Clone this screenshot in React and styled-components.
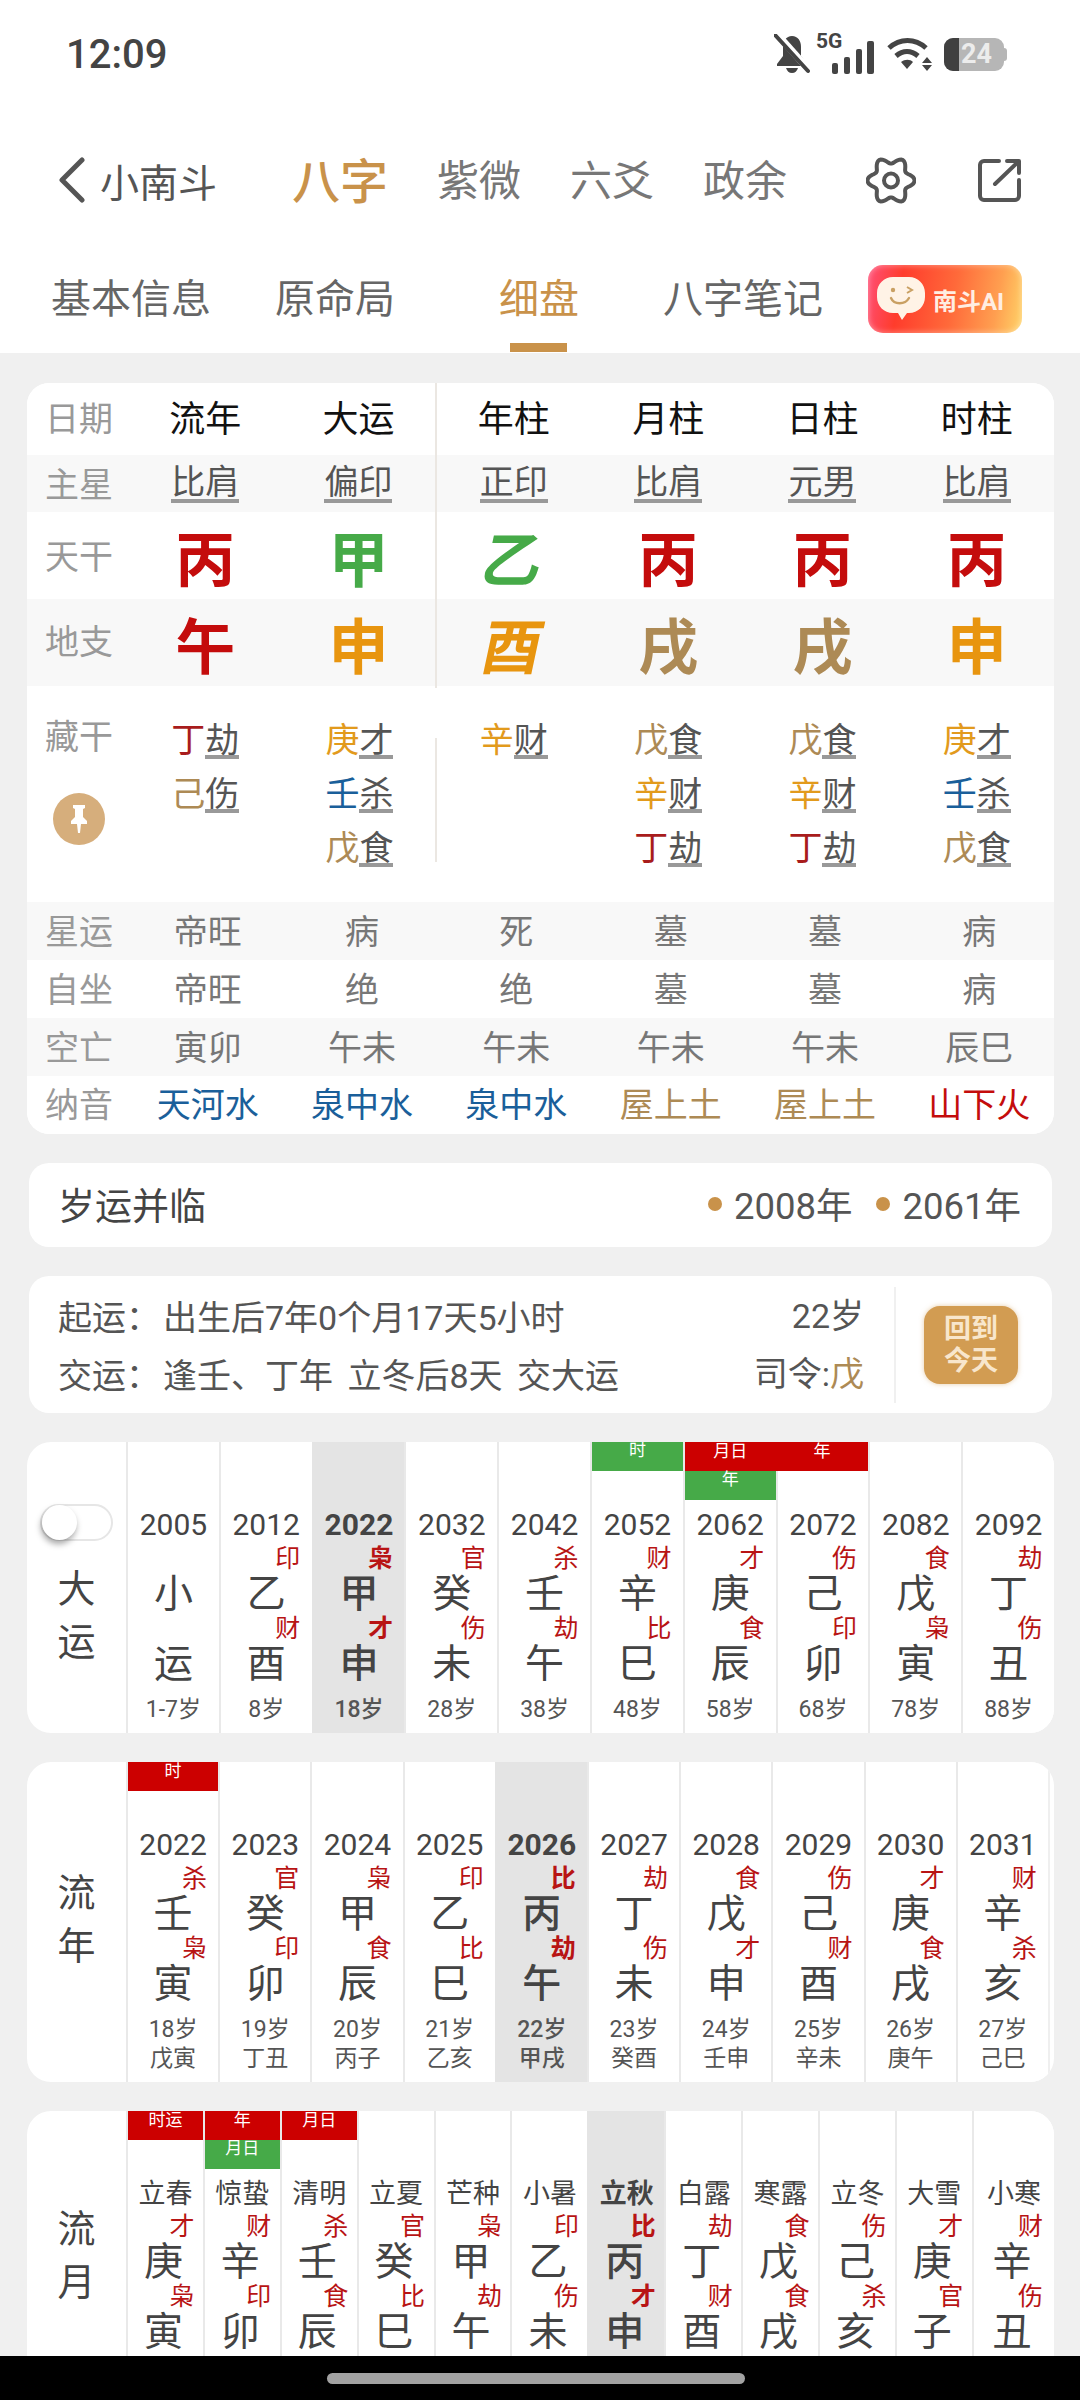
import React from 'react';
import styled, { createGlobalStyle } from 'styled-components';

const RED = '#c40c0c';
const GREEN = '#46aa48';
const ORANGE = '#e8950f';
const BROWN = '#ad8a55';
const BLUE = '#1a5f9a';
const GOLD = '#c9924a';

const elementColor = {
  丙: RED, 丁: '#a81c1c', 午: RED, 甲: GREEN, 乙: GREEN, 申: ORANGE, 酉: ORANGE,
  庚: '#e29a1c', 辛: '#e29a1c', 戌: BROWN, 戊: BROWN, 己: BROWN, 壬: BLUE,
};

const GlobalStyle = createGlobalStyle`
  html, body {
    margin: 0;
    padding: 0;
    background: #f0f0f0;
  }
  body {
    font-family: Roboto, "Noto Sans CJK SC", sans-serif;
    color: #444;
  }
  * {
    box-sizing: border-box;
  }
`;

const Page = styled.div`
  width: 1080px;
  height: 2400px;
  display: flex;
  flex-direction: column;
  overflow: hidden;
`;

const Header = styled.header`
  background: #fff;
  flex: none;
`;

const StatusBar = styled.div`
  height: 108px;
  display: flex;
  align-items: center;
  justify-content: space-between;
  padding: 0 73px 0 66px;
`;

const Clock = styled.span`
  font-size: 40px;
  font-weight: 500;
  color: #444;
`;

const StatusIcons = styled.div`
  display: flex;
  align-items: center;
  gap: 12px;
`;

const Signal = styled.div`
  position: relative;
  width: 58px;
  height: 39px;
  margin-left: -6px;
  display: flex;
  align-items: flex-end;
  justify-content: flex-end;
`;

const FiveG = styled.span`
  position: absolute;
  left: 0;
  top: -4px;
  font-size: 21px;
  line-height: 20px;
  font-weight: 700;
  color: #444;
`;

const Battery = styled.div`
  position: relative;
  width: 60px;
  height: 33px;
  border-radius: 9px;
  background: #b6b6b6;
  overflow: hidden;
  display: flex;
  align-items: center;
  justify-content: flex-end;
  padding-right: 12px;
  font-size: 27px;
  font-weight: 700;
  color: #ececec;
  &::before {
    content: '';
    position: absolute;
    left: 0;
    top: 0;
    bottom: 0;
    width: 15px;
    background: #404040;
  }
`;

const BatteryCap = styled.span`
  width: 3px;
  height: 13px;
  margin-left: -12px;
  background: #b6b6b6;
  border-radius: 0 3px 3px 0;
`;

const NavRow = styled.nav`
  height: 144px;
  display: flex;
  align-items: center;
  padding: 0 58px;
`;

const Back = styled.div`
  display: flex;
  align-items: center;
  gap: 15px;
  font-size: 39px;
  color: #555;
  padding-bottom: 1px;
`;

const Modes = styled.div`
  display: flex;
  align-items: center;
  gap: 49px;
  margin-left: 75px;
  padding-bottom: 5px;
`;

const Mode = styled.span`
  font-size: ${(p) => (p.$active ? '48px' : '42px')};
  font-weight: ${(p) => (p.$active ? 500 : 400)};
  color: ${(p) => (p.$active ? GOLD : '#777')};
`;

const NavActions = styled.div`
  margin-left: auto;
  display: flex;
  align-items: center;
  gap: 61px;
`;

const TabRow = styled.div`
  height: 101px;
  display: grid;
  grid-template-columns: repeat(5, 204px);
  padding-left: 29px;
`;

const Tab = styled.div`
  position: relative;
  display: flex;
  align-items: center;
  justify-content: center;
  padding-bottom: 13px;
  font-size: 40px;
  color: ${(p) => (p.$active ? GOLD : '#666')};
  ${(p) =>
    p.$active &&
    `&::after {
      content: '';
      position: absolute;
      left: 73px;
      bottom: 1px;
      width: 57px;
      height: 9px;
      background: ${GOLD};
    }`}
`;

const AiBadge = styled.div`
  width: 154px;
  height: 68px;
  margin: 13px 0 0 23px;
  border-radius: 15px;
  background: linear-gradient(100deg, #ff4f78 0%, #ff3c2c 22%, #ff6a3a 55%, #ff9f50 82%, #ffd468 100%);
  box-shadow: inset 0 0 6px rgba(255, 255, 255, 0.45);
  display: flex;
  align-items: center;
  gap: 8px;
  padding-left: 9px;
  font-size: 24px;
  font-weight: 700;
  color: #ffeee2;
  white-space: nowrap;
`;

const Scroll = styled.main`
  flex: 1;
  min-height: 0;
  overflow: hidden;
  padding-top: 30px;
  display: flex;
  flex-direction: column;
  gap: 29px;
`;

const BaziCard = styled.section`
  flex: none;
  width: 1027px;
  margin-left: 27px;
  background: #fff;
  border-radius: 22px;
  overflow: hidden;
`;

const BaziRow = styled.div`
  height: ${(p) => p.$h}px;
  display: grid;
  grid-template-columns: 101px repeat(6, 1fr);
  background: ${(p) => (p.$shade ? '#f8f8f8' : '#fff')};
`;

const RowLabel = styled.div`
  display: flex;
  align-items: center;
  justify-content: center;
  padding-left: 3px;
  padding-bottom: ${(p) => p.$lift || 0}px;
  font-size: 34px;
  color: #999;
`;

const BaziCell = styled.div`
  display: flex;
  align-items: center;
  justify-content: center;
  padding-bottom: ${(p) => p.$lift || 0}px;
  padding-left: ${(p) => p.$nudge || 0}px;
  font-size: ${(p) => p.$size || 34}px;
  font-weight: ${(p) => p.$weight || 400};
  color: ${(p) => p.$color || '#777'};
  border-right: ${(p) => (p.$divider ? '2px solid #ebe7e2' : 'none')};
`;

const Underlined = styled.span`
  line-height: 34px;
  border-bottom: 4px solid #999;
  color: #555;
`;

const BigChar = styled.span`
  display: inline-block;
  transform: ${(p) => (p.$slant ? 'skewX(-12deg)' : 'none')};
`;

const HiddenRow = styled.div`
  height: 216px;
  display: grid;
  grid-template-columns: 101px repeat(6, 1fr);
  padding-top: 29px;
`;

const HiddenLabel = styled.div`
  display: flex;
  flex-direction: column;
  align-items: center;
  padding-left: 3px;
  font-size: 34px;
  line-height: 44px;
  color: #999;
`;

const PinButton = styled.div`
  width: 52px;
  height: 52px;
  margin-top: 34px;
  border-radius: 50%;
  background: #d6ae7c;
  display: flex;
  align-items: center;
  justify-content: center;
`;

const HiddenCol = styled.div`
  position: relative;
  display: flex;
  flex-direction: column;
  align-items: center;
  ${(p) =>
    p.$divider &&
    `&::after {
      content: '';
      position: absolute;
      right: 0;
      top: 23px;
      width: 2px;
      height: 124px;
      background: #ebe7e2;
    }`}
`;

const HiddenItem = styled.div`
  height: 54px;
  display: flex;
  align-items: center;
  font-size: 34px;
`;

const HiddenStem = styled.span`
  line-height: 30px;
  padding-bottom: 4px;
  color: ${(p) => p.$color};
`;

const HiddenGod = styled.span`
  line-height: 30px;
  border-bottom: 4px solid #999;
  color: #555;
`;

const SummaryCard = styled.section`
  flex: none;
  width: 1023px;
  height: 84px;
  margin-left: 29px;
  background: #fff;
  border-radius: 20px;
  display: flex;
  align-items: center;
  justify-content: space-between;
  padding: 0 31px 3px 29px;
`;

const SummaryTitle = styled.span`
  font-size: 37px;
  color: #444;
`;

const SummaryYears = styled.div`
  display: flex;
  align-items: center;
  gap: 24px;
  font-size: 36.5px;
  color: #555;
`;

const YearMark = styled.span`
  display: flex;
  align-items: center;
  gap: 12px;
  &::before {
    content: '';
    width: 14px;
    height: 14px;
    border-radius: 50%;
    background: ${GOLD};
  }
`;

const InfoCard = styled.section`
  flex: none;
  width: 1023px;
  height: 137px;
  margin-left: 29px;
  background: #fff;
  border-radius: 20px;
  display: flex;
  align-items: center;
  padding: 0 34px 0 29px;
  font-size: 34px;
  color: #555;
`;

const InfoLines = styled.div`
  flex: 1;
`;

const InfoLine = styled.div`
  height: 58px;
  display: flex;
  align-items: center;
  white-space: pre;
  word-spacing: 6px;
`;

const InfoKey = styled.span`
  width: 105px;
`;

const InfoSide = styled.div`
  text-align: right;
  padding-right: 30px;
  border-right: 2px solid #f0f0f0;
`;

const SideLine = styled.div`
  height: 58px;
  line-height: 58px;
`;

const Accent = styled.span`
  color: ${BROWN};
`;

const BackToday = styled.div`
  width: 94px;
  height: 78px;
  margin-left: 28px;
  border-radius: 16px;
  background: #d29c52;
  box-shadow: 0 0 5px rgba(210, 156, 82, 0.5);
  display: flex;
  flex-direction: column;
  align-items: center;
  justify-content: center;
  font-size: 27px;
  line-height: 32px;
  font-weight: 700;
  color: #f8e6cc;
`;

const ChartCard = styled.section`
  flex: none;
  width: 1027px;
  margin-left: 27px;
  background: #fff;
  border-radius: 24px;
  overflow: hidden;
  display: grid;
  grid-template-columns: ${(p) => p.$columns};
`;

const SideTitle = styled.div`
  display: flex;
  flex-direction: column;
  align-items: center;
  padding-top: ${(p) => p.$pad}px;
  font-size: 38px;
  line-height: 53px;
  color: #444;
`;

const Toggle = styled.div`
  width: 73px;
  height: 37px;
  margin-bottom: 22px;
  border-radius: 19px;
  border: 2px solid #e6e6e6;
  background: #fff;
  position: relative;
  &::before {
    content: '';
    position: absolute;
    left: 0;
    top: -1px;
    width: 35px;
    height: 35px;
    border-radius: 50%;
    background: #fff;
    box-shadow: -1px 4px 6px rgba(0, 0, 0, 0.35);
  }
`;

const Column = styled.div`
  border-left: 2px solid #e9e9e9;
  background: ${(p) => (p.$today ? '#e4e4e4' : '#fff')};
  border-left-color: ${(p) => (p.$today ? '#e4e4e4' : '#e9e9e9')};
  display: flex;
  flex-direction: column;
  align-items: center;
  min-width: 0;
  padding-bottom: 13px;
`;

const MarkerSlot = styled.div`
  width: 100%;
  height: 58px;
`;

const Marker = styled.div`
  height: 29px;
  margin-left: ${(p) => (p.$join ? '-2px' : '0')};
  background: ${(p) => (p.$green ? GREEN : '#cc0000')};
  color: #fff;
  font-size: 17px;
  line-height: ${(p) => (p.$green ? '16px' : '18px')};
  text-align: center;
  white-space: nowrap;
`;

const Heading = styled.div`
  height: ${(p) => (p.$term ? 44 : 48)}px;
  margin-bottom: ${(p) => (p.$term ? 11 : 8)}px;
  display: flex;
  align-items: center;
  font-size: ${(p) => (p.$term ? 27 : 30)}px;
  font-weight: ${(p) => (p.$today ? 700 : 400)};
  color: #444;
  white-space: nowrap;
`;

const Pillar = styled.div`
  position: relative;
  width: 100%;
  height: 70px;
  display: flex;
  align-items: center;
  justify-content: center;
  padding-right: ${(p) => (p.$term ? 4 : 0)}px;
  padding-bottom: 3px;
  font-size: 39px;
  font-weight: ${(p) => (p.$today ? 500 : 400)};
  color: #444;
`;

const God = styled.span`
  position: absolute;
  top: -10px;
  left: calc(50% + ${(p) => (p.$term ? 4 : 9)}px);
  font-size: 25px;
  line-height: 26px;
  font-weight: ${(p) => (p.$today ? 700 : 400)};
  color: #b81414;
`;

const Age = styled.div`
  height: 20px;
  margin-top: 4px;
  line-height: 20px;
  font-size: 23px;
  font-weight: ${(p) => (p.$today ? 500 : 400)};
  color: #555;
  white-space: nowrap;
`;

const GanZhi = styled.div`
  margin-top: 9px;
  height: 20px;
  line-height: 20px;
  font-size: 23px;
  font-weight: ${(p) => (p.$today ? 500 : 400)};
  color: #555;
  white-space: nowrap;
`;

const TailGap = styled.div`
  background: #efefef;
`;

const HomeBar = styled.footer`
  flex: none;
  height: 44px;
  background: #000;
  display: flex;
  justify-content: center;
  padding: 17px 8px 0 0;
`;

const HomeIndicator = styled.div`
  width: 418px;
  height: 11px;
  border-radius: 6px;
  background: #a2a2a2;
`;

const gearPath = (() => {
  const pts = [];
  for (let a = 0; a < 360; a += 4) {
    const t = (a * Math.PI) / 180;
    const r = 20.2 + 3.4 * Math.cos(6 * t);
    pts.push(`${(25 + r * Math.cos(t)).toFixed(1)} ${(24.5 + r * Math.sin(t)).toFixed(1)}`);
  }
  return `M${pts.join('L')}Z`;
})();

const BellOff = () => (
  <svg width="36" height="40" viewBox="0 0 36 40">
    <path d="M18 2c-6 0-9 5-9 11v9l-6 8v2h30v-2l-6-8v-9c0-6-3-11-9-11z" fill="#444" />
    <path d="M12 34h12c-1 3-3 5-6 5s-5-2-6-5z" fill="#444" />
    <path d="M3 0L35 36" stroke="#fff" strokeWidth="7" />
    <path d="M1 1L34 37" stroke="#444" strokeWidth="4" strokeLinecap="round" />
  </svg>
);

const SignalBars = () => (
  <svg width="42" height="33" viewBox="0 0 42 33" fill="#444">
    <rect x="0" y="22" width="6" height="11" rx="2" />
    <rect x="12" y="16" width="6" height="17" rx="2" />
    <rect x="24" y="8" width="6" height="25" rx="2" />
    <rect x="35" y="0" width="7" height="33" rx="2" />
  </svg>
);

const Wifi = () => (
  <svg width="46" height="34" viewBox="0 0 46 34">
    <path d="M3 11C14 1 29 1 40 11" fill="none" stroke="#444" strokeWidth="5" />
    <path d="M10 19c7-6 15-6 22 0" fill="none" stroke="#444" strokeWidth="5" />
    <path d="M15 25c4-3 9-3 12 0l-6 7z" fill="#444" />
    <path d="M41 20l5 6H36zM36 28h10l-5 6z" fill="#444" />
  </svg>
);

const BackChevron = () => (
  <svg width="27" height="46" viewBox="0 0 27 46">
    <path d="M24 3L4 23l20 20" fill="none" stroke="#555" strokeWidth="5" strokeLinecap="round" strokeLinejoin="round" />
  </svg>
);

const Gear = () => (
  <svg width="50" height="49" viewBox="0 0 50 49" fill="none" stroke="#555" strokeWidth="4">
    <path d={gearPath} />
    <circle cx="25" cy="24.5" r="7" />
  </svg>
);

const ShareOut = () => (
  <svg width="45" height="45" viewBox="0 0 45 45" fill="none" stroke="#555" strokeWidth="4" strokeLinecap="round" strokeLinejoin="round">
    <path d="M22 3H7a4 4 0 0 0-4 4v31a4 4 0 0 0 4 4h31a4 4 0 0 0 4-4V22" />
    <path d="M30 3h12v12M18 26L41 4" />
  </svg>
);

const Pin = () => (
  <svg width="20" height="30" viewBox="0 0 20 30" fill="#fff">
    <path d="M4 1h12v3l-2 1v8l4 4v3H12l-1 9h-2l-1-9H2v-3l4-4V5L4 4z" />
  </svg>
);

const Bubble = () => (
  <svg width="48" height="46" viewBox="0 0 48 46">
    <path d="M16 1h16c9 0 16 7 16 16v4c0 9-7 16-16 16h-2l-5 7-4-7h-5C7 37 0 30 0 21v-4C0 8 7 1 16 1z" fill="#fff3e6" />
    <circle cx="16" cy="14" r="2.2" fill="#c9a063" />
    <path d="M30 11l5 3-5 3" fill="none" stroke="#c9a063" strokeWidth="2" />
    <path d="M14 22c3 7 14 7 18 0" fill="none" stroke="#c9a063" strokeWidth="2.4" strokeLinecap="round" />
  </svg>
);

const pillars = [
  { head: '流年', star: '比肩', stem: '丙', branch: '午', hidden: ['丁劫', '己伤'], luck: '帝旺', seat: '帝旺', empty: '寅卯', sound: '天河水', soundColor: BLUE },
  { head: '大运', star: '偏印', stem: '甲', branch: '申', hidden: ['庚才', '壬杀', '戊食'], luck: '病', seat: '绝', empty: '午未', sound: '泉中水', soundColor: BLUE },
  { head: '年柱', star: '正印', stem: '乙', branch: '酉', slant: true, hidden: ['辛财'], luck: '死', seat: '绝', empty: '午未', sound: '泉中水', soundColor: BLUE },
  { head: '月柱', star: '比肩', stem: '丙', branch: '戌', hidden: ['戊食', '辛财', '丁劫'], luck: '墓', seat: '墓', empty: '午未', sound: '屋上土', soundColor: BROWN },
  { head: '日柱', star: '元男', stem: '丙', branch: '戌', hidden: ['戊食', '辛财', '丁劫'], luck: '墓', seat: '墓', empty: '午未', sound: '屋上土', soundColor: BROWN },
  { head: '时柱', star: '比肩', stem: '丙', branch: '申', hidden: ['庚才', '壬杀', '戊食'], luck: '病', seat: '病', empty: '辰巳', sound: '山下火', soundColor: RED },
];

const dayun = [
  { head: '2005', stem: '小', branch: '运', age: '1-7岁' },
  { head: '2012', stem: '乙', sg: '印', branch: '酉', bg: '财', age: '8岁' },
  { head: '2022', stem: '甲', sg: '枭', branch: '申', bg: '才', age: '18岁', today: true },
  { head: '2032', stem: '癸', sg: '官', branch: '未', bg: '伤', age: '28岁' },
  { head: '2042', stem: '壬', sg: '杀', branch: '午', bg: '劫', age: '38岁' },
  { head: '2052', stem: '辛', sg: '财', branch: '巳', bg: '比', age: '48岁', marks: [{ text: '时', green: true }] },
  { head: '2062', stem: '庚', sg: '才', branch: '辰', bg: '食', age: '58岁', marks: [{ text: '月日' }, { text: '年', green: true }] },
  { head: '2072', stem: '己', sg: '伤', branch: '卯', bg: '印', age: '68岁', marks: [{ text: '年', join: true }] },
  { head: '2082', stem: '戊', sg: '食', branch: '寅', bg: '枭', age: '78岁' },
  { head: '2092', stem: '丁', sg: '劫', branch: '丑', bg: '伤', age: '88岁' },
];

const liunian = [
  { head: '2022', stem: '壬', sg: '杀', branch: '寅', bg: '枭', age: '18岁', gz: '戊寅', marks: [{ text: '时' }] },
  { head: '2023', stem: '癸', sg: '官', branch: '卯', bg: '印', age: '19岁', gz: '丁丑' },
  { head: '2024', stem: '甲', sg: '枭', branch: '辰', bg: '食', age: '20岁', gz: '丙子' },
  { head: '2025', stem: '乙', sg: '印', branch: '巳', bg: '比', age: '21岁', gz: '乙亥' },
  { head: '2026', stem: '丙', sg: '比', branch: '午', bg: '劫', age: '22岁', gz: '甲戌', today: true },
  { head: '2027', stem: '丁', sg: '劫', branch: '未', bg: '伤', age: '23岁', gz: '癸酉' },
  { head: '2028', stem: '戊', sg: '食', branch: '申', bg: '才', age: '24岁', gz: '壬申' },
  { head: '2029', stem: '己', sg: '伤', branch: '酉', bg: '财', age: '25岁', gz: '辛未' },
  { head: '2030', stem: '庚', sg: '才', branch: '戌', bg: '食', age: '26岁', gz: '庚午' },
  { head: '2031', stem: '辛', sg: '财', branch: '亥', bg: '杀', age: '27岁', gz: '己巳' },
];

const liuyue = [
  { head: '立春', stem: '庚', sg: '才', branch: '寅', bg: '枭', marks: [{ text: '时运' }] },
  { head: '惊蛰', stem: '辛', sg: '财', branch: '卯', bg: '印', marks: [{ text: '年' }, { text: '月日', green: true }] },
  { head: '清明', stem: '壬', sg: '杀', branch: '辰', bg: '食', marks: [{ text: '月日' }] },
  { head: '立夏', stem: '癸', sg: '官', branch: '巳', bg: '比' },
  { head: '芒种', stem: '甲', sg: '枭', branch: '午', bg: '劫' },
  { head: '小暑', stem: '乙', sg: '印', branch: '未', bg: '伤' },
  { head: '立秋', stem: '丙', sg: '比', branch: '申', bg: '才', today: true },
  { head: '白露', stem: '丁', sg: '劫', branch: '酉', bg: '财' },
  { head: '寒露', stem: '戊', sg: '食', branch: '戌', bg: '食' },
  { head: '立冬', stem: '己', sg: '伤', branch: '亥', bg: '杀' },
  { head: '大雪', stem: '庚', sg: '才', branch: '子', bg: '官' },
  { head: '小寒', stem: '辛', sg: '财', branch: '丑', bg: '伤' },
];

const ChartColumn = ({ item, term }) => (
  <Column $today={item.today}>
    <MarkerSlot>
      {(item.marks || []).map((m) => (
        <Marker key={m.text} $green={m.green} $join={m.join}>
          {m.text}
        </Marker>
      ))}
    </MarkerSlot>
    <Heading $term={term} $today={item.today}>
      {item.head}
    </Heading>
    <Pillar $term={term} $today={item.today}>
      {item.stem}
      {item.sg && <God $term={term} $today={item.today}>{item.sg}</God>}
    </Pillar>
    <Pillar $term={term} $today={item.today}>
      {item.branch}
      {item.bg && <God $term={term} $today={item.today}>{item.bg}</God>}
    </Pillar>
    {item.age && <Age $today={item.today}>{item.age}</Age>}
    {item.gz && <GanZhi $today={item.today}>{item.gz}</GanZhi>}
  </Column>
);

const TextRow = ({ label, field, shade, colorField, lift = 3 }) => (
  <BaziRow $h={58} $shade={shade}>
    <RowLabel $lift={lift}>{label}</RowLabel>
    {pillars.map((p, i) => (
      <BaziCell key={i} $nudge={5} $lift={lift} $color={colorField ? p[colorField] : undefined}>
        {p[field]}
      </BaziCell>
    ))}
  </BaziRow>
);

const App = () => (
  <Page>
    <GlobalStyle />
    <Header>
      <StatusBar>
        <Clock>12:09</Clock>
        <StatusIcons>
          <BellOff />
          <Signal>
            <FiveG>5G</FiveG>
            <SignalBars />
          </Signal>
          <Wifi />
          <Battery>24</Battery>
          <BatteryCap />
        </StatusIcons>
      </StatusBar>
      <NavRow>
        <Back>
          <BackChevron />
          小南斗
        </Back>
        <Modes>
          <Mode $active>八字</Mode>
          <Mode>紫微</Mode>
          <Mode>六爻</Mode>
          <Mode>政余</Mode>
        </Modes>
        <NavActions>
          <Gear />
          <ShareOut />
        </NavActions>
      </NavRow>
      <TabRow>
        <Tab>基本信息</Tab>
        <Tab>原命局</Tab>
        <Tab $active>细盘</Tab>
        <Tab>八字笔记</Tab>
        <AiBadge>
          <Bubble />
          南斗AI
        </AiBadge>
      </TabRow>
    </Header>

    <Scroll>
      <BaziCard>
        <BaziRow $h={72}>
          <RowLabel $lift={6}>日期</RowLabel>
          {pillars.map((p, i) => (
            <BaziCell key={p.head} $size={36} $lift={6} $color="#111" $divider={i === 1}>
              {p.head}
            </BaziCell>
          ))}
        </BaziRow>
        <BaziRow $h={57} $shade>
          <RowLabel $lift={3}>主星</RowLabel>
          {pillars.map((p, i) => (
            <BaziCell key={p.head} $divider={i === 1}>
              <Underlined>{p.star}</Underlined>
            </BaziCell>
          ))}
        </BaziRow>
        <BaziRow $h={87}>
          <RowLabel $lift={9}>天干</RowLabel>
          {pillars.map((p, i) => (
            <BaziCell key={p.head} $size={60} $lift={6} $weight={700} $color={elementColor[p.stem]} $divider={i === 1}>
              <BigChar $slant={p.slant}>{p.stem}</BigChar>
            </BaziCell>
          ))}
        </BaziRow>
        <BaziRow $h={87} $shade>
          <RowLabel $lift={9}>地支</RowLabel>
          {pillars.map((p, i) => (
            <BaziCell key={p.head} $size={60} $lift={2} $weight={700} $color={elementColor[p.branch]} $divider={i === 1}>
              <BigChar $slant={p.slant}>{p.branch}</BigChar>
            </BaziCell>
          ))}
        </BaziRow>
        <HiddenRow>
          <HiddenLabel>
            藏干
            <PinButton>
              <Pin />
            </PinButton>
          </HiddenLabel>
          {pillars.map((p, i) => (
            <HiddenCol key={p.head} $divider={i === 1}>
              {p.hidden.map((h) => (
                <HiddenItem key={h}>
                  <HiddenStem $color={elementColor[h[0]]}>{h[0]}</HiddenStem>
                  <HiddenGod>{h[1]}</HiddenGod>
                </HiddenItem>
              ))}
            </HiddenCol>
          ))}
        </HiddenRow>
        <TextRow label="星运" field="luck" shade />
        <TextRow label="自坐" field="seat" />
        <TextRow label="空亡" field="empty" shade />
        <TextRow label="纳音" field="sound" colorField="soundColor" lift={5} />
      </BaziCard>

      <SummaryCard>
        <SummaryTitle>岁运并临</SummaryTitle>
        <SummaryYears>
          <YearMark>2008年</YearMark>
          <YearMark>2061年</YearMark>
        </SummaryYears>
      </SummaryCard>

      <InfoCard>
        <InfoLines>
          <InfoLine>
            <InfoKey>起运：</InfoKey>出生后7年0个月17天5小时
          </InfoLine>
          <InfoLine>
            <InfoKey>交运：</InfoKey>逢壬、丁年 立冬后8天 交大运
          </InfoLine>
        </InfoLines>
        <InfoSide>
          <SideLine>22岁</SideLine>
          <SideLine>
            司令:<Accent>戊</Accent>
          </SideLine>
        </InfoSide>
        <BackToday>
          <span>回到</span>
          <span>今天</span>
        </BackToday>
      </InfoCard>

      <ChartCard $columns="99px repeat(10, 1fr)">
        <SideTitle $pad={62}>
          <Toggle />
          <span>大</span>
          <span>运</span>
        </SideTitle>
        {dayun.map((d) => (
          <ChartColumn key={d.head} item={d} />
        ))}
      </ChartCard>

      <ChartCard $columns="99px repeat(10, 92.2px) 2px 4px">
        <SideTitle $pad={105}>
          <span>流</span>
          <span>年</span>
        </SideTitle>
        {liunian.map((d) => (
          <ChartColumn key={d.head} item={d} />
        ))}
        <TailGap />
      </ChartCard>

      <ChartCard $columns="99px repeat(11, 76.9px) 1fr">
        <SideTitle $pad={92}>
          <span>流</span>
          <span>月</span>
        </SideTitle>
        {liuyue.map((d) => (
          <ChartColumn key={d.head} item={d} term />
        ))}
      </ChartCard>
    </Scroll>

    <HomeBar>
      <HomeIndicator />
    </HomeBar>
  </Page>
);

export default App;
